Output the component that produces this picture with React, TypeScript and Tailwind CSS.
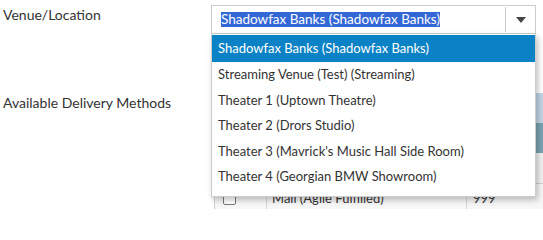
import React from "react";

const items = [
  "Shadowfax Banks (Shadowfax Banks)",
  "Streaming Venue (Test) (Streaming)",
  "Theater 1 (Uptown Theatre)",
  "Theater 2 (Drors Studio)",
  "Theater 3 (Mavrick's Music Hall Side Room)",
  "Theater 4 (Georgian BMW Showroom)",
];

export default function App() {
  return (
    <div className="relative w-[543px] h-[209px] overflow-hidden bg-white text-[14px] text-[#333] font-['Lato','Liberation_Sans',sans-serif]">
      {/* Row 1 */}
      <div className="flex pt-[5px]">
        <div className="w-[211px] pl-[3px] leading-5">Venue/Location</div>
        <div className="flex w-[325px] h-[29px] border border-[#cccccc] bg-white">
          <div className="flex-1 flex items-center pl-[9px]">
            <span className="bg-[#3367d6] text-white text-[13.5px] leading-[15px]">Shadowfax Banks (Shadowfax Banks)</span>
          </div>
          <div className="w-[30px] my-[1px] border-l border-[#cccccc] flex items-center justify-center">
            <svg width="10" height="6" viewBox="0 0 10 6">
              <path d="M0 0 H10 L5 6 Z" fill="#444" />
            </svg>
          </div>
        </div>
      </div>

      {/* Row 2 */}
      <div className="flex mt-[59px]">
        <div className="w-[214px] pl-[3px] leading-5 shrink-0">Available Delivery Methods</div>
        <div className="w-[400px] shrink-0 border-l border-[#d0d0d0]">
          <div className="h-[30px] bg-[#c2d5e6]" />
          <div className="h-[30px] bg-[#7aa3b3]" />
          <div className="h-[30px] bg-[#f1f1f1]" />
          <div className="flex h-[30px] border-t border-[#cfcfcf] bg-[#f7f7f7]">
            <div className="w-[52px] flex items-start pt-[8px] pl-[8px] border-r border-[#d5d5d5]">
              <div className="w-[13px] h-[13px] border border-[#777] rounded-[2px] bg-white" />
            </div>
            <div className="w-[200px] pl-[5px] pt-[4px] border-r border-[#d5d5d5] leading-5 text-[13px]">Mail (Agile Fulfilled)</div>
            <div className="pl-[6px] pt-[4px] leading-5 text-[13px]">999</div>
          </div>
        </div>
      </div>

      {/* Dropdown */}
      <div className="absolute left-[211px] top-[34px] w-[325px] h-[163px] bg-white border border-[#cccccc] border-t-0 shadow-[2px_3px_6px_rgba(0,0,0,0.25)] text-[13px]">
        {items.map((it, i) => (
          <div
            key={it}
            className={
              i === 0
                ? "h-[27px] mt-[1px] flex items-center pl-[6px] bg-[#0b82c5] text-white"
                : "h-[25.5px] flex items-center pl-[6px] text-[#333]"
            }
          >
            {it}
          </div>
        ))}
      </div>
    </div>
  );
}
